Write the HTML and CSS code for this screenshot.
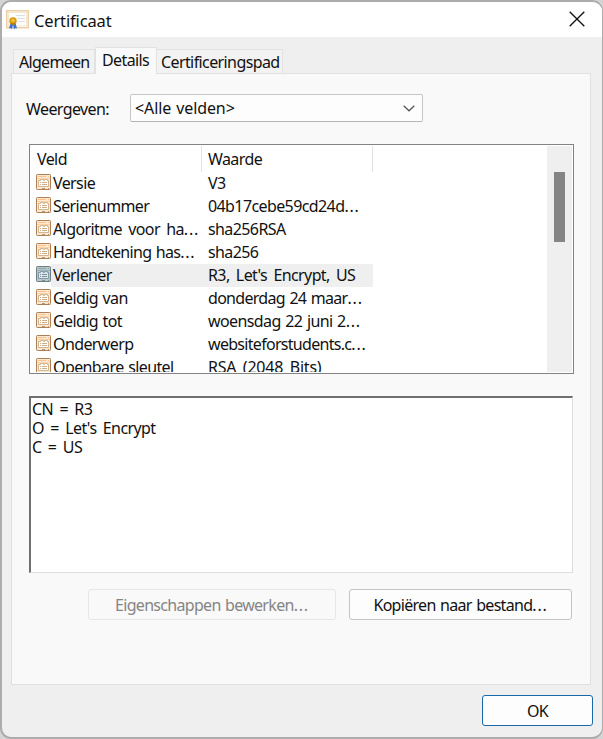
FILE: index.html
```
<!DOCTYPE html>
<html lang="nl">
<head>
<meta charset="utf-8">
<title>Certificaat</title>
<link rel="stylesheet" href="styles.css">
</head>
<body>
<svg class="defs" width="0" height="0" aria-hidden="true">
  <symbol id="field" viewBox="0 0 15 16">
    <rect x=".5" y=".5" width="14" height="15" rx=".8" fill="var(--face)" stroke="var(--edge)"/>
    <path d="M2 2.5h8M12 2.5h1" stroke="var(--light)"/>
    <path d="M1 4.5h13" stroke="var(--light)" stroke-width=".6"/>
    <path d="M2.5 6.5h2v-1h3v1h1v-1h3v1h1v6h-10z" fill="var(--paper)" stroke="var(--line)" stroke-width=".8"/>
    <path d="M4 8.5h1M6 8.5h5M4 10.5h1M6 10.5h5" stroke="var(--line)" stroke-width=".9"/>
    <path d="M6 14.5h3M12 14.5h1" stroke="var(--edge)" stroke-width=".8"/>
  </symbol>
</svg>
<main class="window">
  <header class="titlebar">
    <svg class="cert-icon" width="23" height="20" viewBox="0 0 23 20">
      <rect x=".75" y=".75" width="21.5" height="17" fill="#fffdf9" stroke="#ead0a7" stroke-width="1.5"/>
      <rect x="2.5" y="2.5" width="18" height="13.5" fill="#fdfdfd" stroke="#f5e7cf"/>
      <path d="M10 5.5h9M11 8.5h8M12 11.5h7" stroke="#dde1e7"/>
      <path d="M4.5 13L3 18.5l2-.6 1 1.6 1-5 1 5 1.4-1.6 1.6.6-1.5-5.5z" fill="#3d71ca"/>
      <circle cx="7" cy="11" r="3.7" fill="#d79a08"/>
      <circle cx="7" cy="10.5" r="1.8" fill="#efc044"/>
      <path d="M5 13.5q2 1.5 4 0" fill="none" stroke="#a66d08"/>
    </svg>
    <h1 class="title">Certificaat</h1>
    <svg class="close" width="16" height="16" viewBox="0 0 16 16"><path d="M.7.7l14.6 14.6M15.3.7L.7 15.3" stroke="#111" stroke-width="1.35"/></svg>
  </header>
  <nav class="tabs">
    <span class="tab first">Algemeen</span>
    <span class="tab active">Details</span>
    <span class="tab last">Certificeringspad</span>
  </nav>
  <section class="panel">
    <div class="show">
      <span class="label">Weergeven:</span>
      <div class="combo"><span>&lt;Alle velden&gt;</span><svg width="12" height="7" viewBox="0 0 12 7"><path d="M.7.7L6 5.8 11.3.7" fill="none" stroke="#555" stroke-width="1.2"/></svg></div>
    </div>
    <div class="list">
      <div class="table">
        <div class="head"><span class="h1">Veld</span><span class="h2">Waarde</span></div>
        <div class="row"><svg class="ico"><use href="#field"/></svg><span class="name">Versie</span><span class="val">V3</span></div>
        <div class="row"><svg class="ico"><use href="#field"/></svg><span class="name">Serienummer</span><span class="val">04b17cebe59cd24d<i>...</i></span></div>
        <div class="row"><svg class="ico"><use href="#field"/></svg><span class="name loose">Algoritme voor ha<i>...</i></span><span class="val">sha256RSA</span></div>
        <div class="row"><svg class="ico"><use href="#field"/></svg><span class="name tight">Handtekening has<i>...</i></span><span class="val">sha256</span></div>
        <div class="row selected"><svg class="ico"><use href="#field"/></svg><span class="name">Verlener</span><span class="val loose">R3, Let's Encrypt, US</span></div>
        <div class="row"><svg class="ico"><use href="#field"/></svg><span class="name">Geldig van</span><span class="val tight">donderdag 24 maar<i>...</i></span></div>
        <div class="row"><svg class="ico"><use href="#field"/></svg><span class="name">Geldig tot</span><span class="val">woensdag 22 juni 2<i>...</i></span></div>
        <div class="row"><svg class="ico"><use href="#field"/></svg><span class="name">Onderwerp</span><span class="val tight">websiteforstudents.c<i>...</i></span></div>
        <div class="row"><svg class="ico"><use href="#field"/></svg><span class="name">Openbare sleutel</span><span class="val wide">RSA (2048 Bits)</span></div>
      </div>
      <div class="scroll"><div class="thumb"></div></div>
    </div>
    <div class="value-box"><div>CN = R3</div><div>O = Let's Encrypt</div><div>C = US</div></div>
    <div class="actions">
      <button class="btn edit" disabled>Eigenschappen bewerken<i>...</i></button>
      <button class="btn copy">Kopiëren naar bestand<i>...</i></button>
    </div>
  </section>
  <footer class="footer"><button class="btn ok">OK</button></footer>
</main>
</body>
</html>
```
FILE: styles.css
```
* { box-sizing: border-box; }
body {
  margin: 0;
  background: #d4d4d4;
  font: 16px/23px "Noto Sans", sans-serif;
  letter-spacing: -0.6px;
  word-spacing: 1px;
  color: #111;
  overflow: hidden;
}
/* Trailing dots are set wider than the text before them. */
i { font-style: normal; letter-spacing: 0.8px; }
.defs { display: block; height: 0; }
.window {
  width: 603px;
  height: 739px;
  border: 2px solid #acacac;
  border-right-width: 1px;
  border-radius: 11px;
  background: #efefef;
  overflow: hidden;
}
.titlebar {
  display: flex;
  height: 35px;
  padding: 0 17px 0 4px;
  background: #fff;
  align-items: center;
}
.title { margin: 1px auto 0 5px; font-size: 16.5px; font-weight: 400; letter-spacing: -0.15px; }
.cert-icon { margin-top: 1px; }
.close { margin-top: -2px; }
.tabs { display: flex; height: 36px; padding-left: 11px; align-items: flex-end; }
.tab {
  width: 82px;
  height: 24px;
  padding-left: 6px;
  border: 1px solid #e2e2e2;
  border-bottom: 0;
  background: #f2f2f2;
  white-space: nowrap;
}
.tab.first { padding-left: 5px; letter-spacing: -0.7px; line-height: 24px; }
.tab.active {
  width: 62px;
  height: 27px;
  margin-bottom: -1px;
  line-height: 25px;
  background: #f9f9f9;
  z-index: 1;
}
.tab.last { width: 126px; padding-left: 4px; border-left: 0; line-height: 24px; }
.panel {
  width: 580px;
  height: 612px;
  margin-left: 9px;
  padding: 20px 16px 0 17px;
  border: 1px solid #e1e1e1;
  background: #f9f9f9;
}
.show { display: flex; height: 28px; }
.label { width: 104px; margin-left: -3px; padding-top: 4px; }
.combo {
  display: flex;
  width: 293px;
  height: 28px;
  padding: 0 7px 0 4px;
  align-items: center;
  justify-content: space-between;
  border: 1px solid #c6c6c6;
  border-bottom-color: #b5b5b5;
  border-radius: 2px;
  background: #fdfdfd;
  letter-spacing: -0.1px;
}
.list {
  display: flex;
  width: 545px;
  height: 230px;
  margin-top: 22px;
  padding: 1px;
  border: 1px solid #828387;
  background: #fff;
  justify-content: space-between;
}
.table { width: 342px; height: 226px; overflow: hidden; }
.head { display: flex; height: 26px; }
.head span { border-right: 1px solid #e2e2e2; padding-top: 2px; }
.head .h1 { width: 171px; padding-left: 6px; }
.head .h2 { width: 171px; padding-left: 6px; }
.row {
  --face: #fbe8d0;
  --edge: #ad8058;
  --light: #ffc18c;
  --line: #c9a47b;
  --paper: #fffdf8;
  display: flex;
  height: 23px;
  padding-left: 5px;
  white-space: nowrap;
}
.ico { width: 15px; height: 16px; flex: none; margin-top: 2px; }
.name { width: 155px; flex: none; padding-left: 2px; }
.val { width: 167px; flex: none; padding-left: 2px; }
.loose { word-spacing: 2.7px; }
.tight { letter-spacing: -0.7px; }
.wide { letter-spacing: -0.2px; word-spacing: 2.5px; }
.selected {
  --face: #b8c7ca;
  --edge: #6e7f83;
  --light: #91a5ad;
  --line: #718c9c;
  --paper: #dce6ea;
  background: linear-gradient(90deg, transparent 20px, #efefef 20px);
}
.scroll { width: 25px; padding: 26px 7px 0; background: #efefef; }
.thumb { width: 11px; height: 70px; background: #858585; }
.value-box {
  width: 544px;
  height: 177px;
  margin-top: 22px;
  padding: 2px 0 0 1px;
  border: 2px solid #707070;
  border-right: 1px solid #dedede;
  border-bottom: 1px solid #dedede;
  background: #fff;
  line-height: 19px;
  word-spacing: 2.8px;
}
.actions { display: flex; gap: 13px; margin: 16px 0 0 59px; }
.btn {
  height: 31px;
  padding: 1px 0 0;
  border: 1px solid #c4c4c4;
  border-radius: 3px;
  background: #fdfdfd;
  color: #111;
  font: inherit;
  letter-spacing: -0.7px;
  word-spacing: inherit;
}
.edit { width: 248px; border-color: #e7e7e7; background: #f9f9f9; color: #858585; }
.copy { width: 223px; }
.footer { display: flex; padding: 10px 9px 0; justify-content: flex-end; }
.ok { width: 111px; height: 31px; border-color: #1769aa; }
```
